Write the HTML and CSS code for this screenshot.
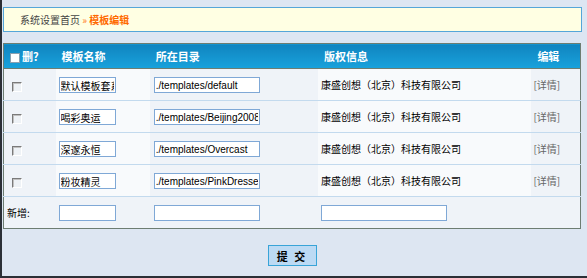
FILE: index.html
```html
<!DOCTYPE html>
<html lang="zh-CN">
<head>
    <meta charset="UTF-8">
    <title>模板编辑</title>
    <link rel="stylesheet" href="styles.css">
</head>
<body>
    <div class="quadro">
        <div class="caminho">
            <span>系统设置首页</span>
            <span class="seta">&raquo;</span>
            <span class="atual">模板编辑</span>
        </div>

        <form class="lista-modelos">
            <table>
                <colgroup>
                    <col class="c1"><col class="c2"><col class="c3"><col class="c4"><col class="c5">
                </colgroup>
                <thead>
                    <tr>
                        <th><input type="checkbox" class="marca topo">删?</th>
                        <th>模板名称</th>
                        <th>所在目录</th>
                        <th>版权信息</th>
                        <th>编辑</th>
                    </tr>
                </thead>
                <tbody>
                    <tr>
                        <td><input type="checkbox" class="marca"></td>
                        <td class="claro"><input type="text" class="nome" value="默认模板套系"></td>
                        <td><input type="text" class="dir" value="./templates/default"></td>
                        <td class="claro">康盛创想（北京）科技有限公司</td>
                        <td><a class="detalhe" href="#">[详情]</a></td>
                    </tr>
                    <tr>
                        <td><input type="checkbox" class="marca"></td>
                        <td class="claro"><input type="text" class="nome" value="喝彩奥运"></td>
                        <td><input type="text" class="dir" value="./templates/Beijing2008"></td>
                        <td class="claro">康盛创想（北京）科技有限公司</td>
                        <td><a class="detalhe" href="#">[详情]</a></td>
                    </tr>
                    <tr>
                        <td><input type="checkbox" class="marca"></td>
                        <td class="claro"><input type="text" class="nome" value="深邃永恒"></td>
                        <td><input type="text" class="dir" value="./templates/Overcast"></td>
                        <td class="claro">康盛创想（北京）科技有限公司</td>
                        <td><a class="detalhe" href="#">[详情]</a></td>
                    </tr>
                    <tr>
                        <td><input type="checkbox" class="marca"></td>
                        <td class="claro"><input type="text" class="nome" value="粉妆精灵"></td>
                        <td><input type="text" class="dir" value="./templates/PinkDresser"></td>
                        <td class="claro">康盛创想（北京）科技有限公司</td>
                        <td><a class="detalhe" href="#">[详情]</a></td>
                    </tr>
                    <tr class="novo">
                        <td>新增:</td>
                        <td><input type="text" class="nome"></td>
                        <td><input type="text" class="dir"></td>
                        <td><input type="text" class="copy"></td>
                        <td></td>
                    </tr>
                </tbody>
            </table>

            <div class="acoes">
                <button type="submit" class="enviar">提 交</button>
            </div>
        </form>
    </div>
</body>
</html>
```

FILE: styles.css
```css
body {
    margin: 0;
    font-family: "Noto Sans CJK SC", "Liberation Sans", sans-serif;
    font-size: 10px;
    color: #000;
}

.quadro {
    box-sizing: border-box;
    height: 278px;
    padding: 7px 5px 0 1px;
    background-color: #dde6f2;
    border-left: 2px solid #2b2f36;
    border-bottom: 2px solid #2b2f36;
}

.caminho {
    height: 23px;
    line-height: 23px;
    padding-left: 16px;
    background-color: #ffffe3;
    border: 1px solid #55a6d8;
    color: #444;
    font-size: 10px;
}

.caminho .seta {
    color: #ff7a1a;
}

.caminho .atual {
    color: #ff6a00;
    font-weight: bold;
}

.lista-modelos {
    margin: 11px 1px 0 0;
}

.lista-modelos table {
    width: 578px;
    border-collapse: collapse;
    table-layout: fixed;
    border: 1px solid #6d7d72;
}

.c1 { width: 52px; }
.c2 { width: 94px; }
.c3 { width: 168px; }
.c4 { width: 213px; }
.c5 { width: 49px; }

.lista-modelos th {
    height: 24px;
    padding: 0 6px;
    text-align: left;
    color: #fff;
    font-size: 11px;
    font-weight: bold;
    background: linear-gradient(#1184bf, #18a2dc);
    border-bottom: 1px solid #6d7d72;
}

.lista-modelos td {
    height: 31px;
    padding: 0 3px;
    background-color: #eff3f8;
    border-bottom: 1px solid #c3daee;
    white-space: nowrap;
    overflow: hidden;
}

.lista-modelos td.claro {
    background-color: #f8fafc;
}

.lista-modelos tr.novo td {
    border-bottom: none;
}

.lista-modelos input[type="text"] {
    box-sizing: border-box;
    height: 16px;
    padding: 0 1px;
    border: 1px solid #7fa8d6;
    background-color: #fff;
    font-family: "Liberation Sans", "Noto Sans CJK SC", sans-serif;
    font-size: 10px;
    color: #000;
    vertical-align: middle;
}

.lista-modelos input.nome {
    width: 57px;
    font-family: "Noto Sans CJK SC", sans-serif;
}

.lista-modelos input.dir {
    width: 106px;
    margin-left: 1px;
}

.lista-modelos input.copy {
    width: 126px;
}

.marca {
    -webkit-appearance: none;
    appearance: none;
    box-sizing: border-box;
    width: 10px;
    height: 10px;
    margin: 3px 0 0 5px;
    background-color: #eef2f6;
    border-top: 1px solid #7a7a7a;
    border-left: 1px solid #7a7a7a;
    border-right: 1px solid #fff;
    border-bottom: 1px solid #fff;
    box-shadow: inset 1px 1px 0 #c0c0c0;
    vertical-align: middle;
}

.marca.topo {
    margin: 0 2px 0 0;
    background-color: #fff;
    border: 1px solid #8aa0b0;
    box-shadow: none;
}

.detalhe {
    margin-left: -1px;
    color: #666;
    text-decoration: none;
}

.acoes {
    padding-top: 16px;
    text-align: center;
}

.enviar {
    width: 49px;
    height: 21px;
    padding: 0;
    background-color: #bcdaf4;
    border: 1px solid #38a4d8;
    font-family: "Noto Sans CJK SC", sans-serif;
    font-size: 11px;
    font-weight: bold;
    letter-spacing: 2px;
    cursor: pointer;
}
```
